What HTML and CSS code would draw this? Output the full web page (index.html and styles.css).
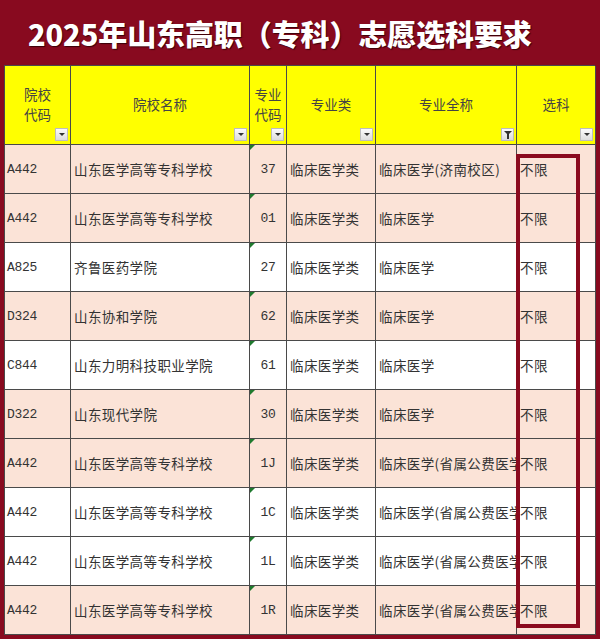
FILE: index.html
```html
<!DOCTYPE html>
<html lang="zh">
<head>
<meta charset="utf-8">
<link rel="stylesheet" href="styles.css">
</head>
<body>
<div class="page">
  <h1 class="title">2025年山东高职（专科）志愿选科要求</h1>
  <div class="sheet">
    <div class="grid">
      <div class="hd c1"><span>院校<br>代码</span><i class="dd"></i></div>
      <div class="hd c2"><span>院校名称</span><i class="dd"></i></div>
      <div class="hd c3"><span>专业<br>代码</span><i class="dd"></i></div>
      <div class="hd c4"><span>专业类</span><i class="dd"></i></div>
      <div class="hd c5"><span>专业全称</span><i class="dd filter"></i></div>
      <div class="hd c6"><span>选科</span><i class="dd"></i></div>

      <div class="cell code pink">A442</div><div class="cell pink">山东医学高等专科学校</div><div class="cell num pink">37</div><div class="cell pink">临床医学类</div><div class="cell pink">临床医学(济南校区)</div><div class="cell pink">不限</div>
      <div class="cell code pink">A442</div><div class="cell pink">山东医学高等专科学校</div><div class="cell num pink">01</div><div class="cell pink">临床医学类</div><div class="cell pink">临床医学</div><div class="cell pink">不限</div>
      <div class="cell code">A825</div><div class="cell">齐鲁医药学院</div><div class="cell num">27</div><div class="cell">临床医学类</div><div class="cell">临床医学</div><div class="cell">不限</div>
      <div class="cell code pink">D324</div><div class="cell pink">山东协和学院</div><div class="cell num pink">62</div><div class="cell pink">临床医学类</div><div class="cell pink">临床医学</div><div class="cell pink">不限</div>
      <div class="cell code">C844</div><div class="cell">山东力明科技职业学院</div><div class="cell num">61</div><div class="cell">临床医学类</div><div class="cell">临床医学</div><div class="cell">不限</div>
      <div class="cell code pink">D322</div><div class="cell pink">山东现代学院</div><div class="cell num pink">30</div><div class="cell pink">临床医学类</div><div class="cell pink">临床医学</div><div class="cell pink">不限</div>
      <div class="cell code pink">A442</div><div class="cell pink">山东医学高等专科学校</div><div class="cell num pink">1J</div><div class="cell pink">临床医学类</div><div class="cell pink">临床医学(省属公费医学</div><div class="cell pink">不限</div>
      <div class="cell code">A442</div><div class="cell">山东医学高等专科学校</div><div class="cell num">1C</div><div class="cell">临床医学类</div><div class="cell">临床医学(省属公费医学</div><div class="cell">不限</div>
      <div class="cell code">A442</div><div class="cell">山东医学高等专科学校</div><div class="cell num">1L</div><div class="cell">临床医学类</div><div class="cell">临床医学(省属公费医学</div><div class="cell">不限</div>
      <div class="cell code pink">A442</div><div class="cell pink">山东医学高等专科学校</div><div class="cell num pink">1R</div><div class="cell pink">临床医学类</div><div class="cell pink">临床医学(省属公费医学</div><div class="cell pink">不限</div>
    </div>
    <div class="highlight"></div>
  </div>
</div>
</body>
</html>
```

FILE: styles.css
```css
* { box-sizing: border-box; margin: 0; padding: 0; }
html, body { background: #880a1f; }
body { width: 600px; height: 639px; overflow: hidden; font-family: "Noto Sans CJK SC", "Noto Sans", sans-serif; }
.page { padding: 0 0 0 4px; }
.title {
  height: 65px;
  padding: 16px 0 0 24px;
  color: #fff;
  font-size: 29px;
  font-weight: 900;
  line-height: 34px;
  letter-spacing: -0.1px;
  text-shadow: 1px 1px 1px #3a0008;
  white-space: nowrap;
}
.sheet { position: relative; width: 591px; }
.grid {
  display: grid;
  grid-template-columns: 66px 179px 37px 89px 141px 79px;
  grid-template-rows: 79px repeat(10, 49px);
  border-left: 1px solid #4a4a4a;
  border-top: 1px solid #4a4a4a;
}
.hd, .cell {
  border-right: 1px solid #4a4a4a;
  border-bottom: 1px solid #4a4a4a;
  color: #333;
  font-size: 13.5px;
}
.hd {
  position: relative;
  background: #ffff00;
  display: flex;
  align-items: center;
  justify-content: center;
  text-align: center;
  line-height: 20px;
  padding-bottom: 2px;
  color: #444;
}
.dd {
  position: absolute;
  right: 2px;
  bottom: 3px;
  width: 13px;
  height: 13px;
  background: linear-gradient(#fbfbfb, #dcdcdc);
  border: 1px solid #bdbdbd;
}
.dd::after {
  content: "";
  position: absolute;
  left: 3px;
  top: 4px;
  border-left: 3px solid transparent;
  border-right: 3px solid transparent;
  border-top: 3px solid #333;
}
.dd.filter::after {
  left: 2px; top: 2px;
  border-left: 4px solid transparent;
  border-right: 4px solid transparent;
  border-top: 4px solid #333;
}
.dd.filter::before {
  content: "";
  position: absolute;
  left: 5px; top: 5px;
  width: 2px; height: 5px;
  background: #333;
}
.cell {
  position: relative;
  background: #fff;
  display: flex;
  align-items: center;
  padding-left: 3px;
  white-space: nowrap;
  overflow: hidden;
  letter-spacing: 0.4px;
}
.cell.pink { background: #fbe3d7; }
.cell.code { font-family: "Liberation Mono", monospace; font-size: 13px; letter-spacing: -0.3px; padding-left: 2px; }
.cell.num { justify-content: center; padding-left: 0; font-family: "Liberation Mono", monospace; font-size: 13px; letter-spacing: -0.3px; }
.cell.num::before {
  content: "";
  position: absolute;
  left: 0; top: 0;
  border-top: 5px solid #1f7a2e;
  border-right: 5px solid transparent;
}
.highlight {
  position: absolute;
  left: 512px;
  top: 89px;
  width: 64px;
  height: 474px;
  border: 4px solid #8b0a1e;
}
```
